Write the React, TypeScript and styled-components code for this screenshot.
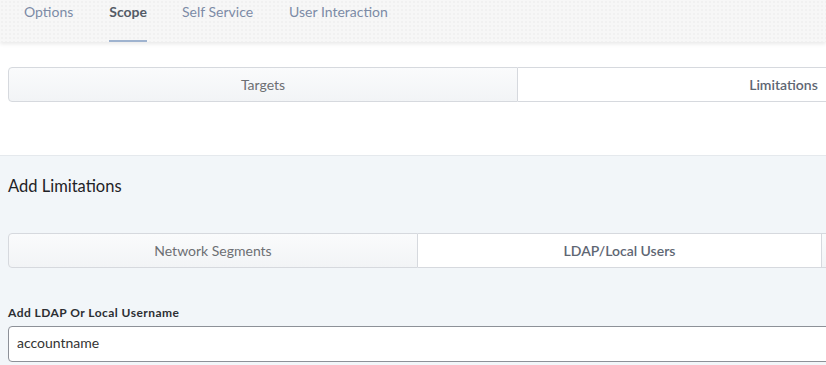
import styled, { createGlobalStyle } from 'styled-components';

const GlobalStyle = createGlobalStyle`
  html, body {
    margin: 0;
    padding: 0;
    background: #fff;
    overflow: hidden;
  }
  body {
    font-family: Lato, 'Open Sans', sans-serif;
    -webkit-font-smoothing: antialiased;
  }
`;

const Page = styled.div`
  width: 826px;
  height: 365px;
  overflow: hidden;
`;

const TabBar = styled.nav`
  height: 42px;
  display: flex;
  align-items: stretch;
  padding-left: 24px;
  background-color: #f7f7f7;
  background-image: radial-gradient(#f1f1f1 1px, transparent 1px);
  background-size: 4px 4px;
  box-shadow: 0 2px 4px rgba(0, 0, 0, 0.09);
  position: relative;
  z-index: 1;
`;

const Tab = styled.a<{ $active?: boolean; $gap: number }>`
  display: flex;
  align-items: flex-start;
  margin-right: ${({ $gap }) => $gap}px;
  padding-top: 3px;
  font-size: 14px;
  font-weight: ${({ $active }) => ($active ? 700 : 400)};
  color: ${({ $active }) => ($active ? '#545b66' : '#7c8ba6')};
  border-bottom: 2px solid ${({ $active }) => ($active ? '#9fb3cf' : 'transparent')};
  box-sizing: border-box;
  cursor: pointer;
`;

const TopSection = styled.section`
  height: 113px;
  padding: 25px 0 0 8px;
  box-sizing: border-box;
`;

const Segmented = styled.div`
  display: flex;
  height: 35px;
`;

const Segment = styled.div<{ $active?: boolean; $width: number; $first?: boolean }>`
  flex: 0 0 ${({ $width }) => $width}px;
  display: flex;
  align-items: center;
  justify-content: center;
  box-sizing: border-box;
  border: 1px solid #d6d9de;
  border-left-width: ${({ $first }) => ($first ? 1 : 0)}px;
  border-radius: ${({ $first }) => ($first ? '4px 0 0 4px' : '0')};
  background: ${({ $active }) =>
    $active ? '#fff' : 'linear-gradient(#fafbfc, #f2f4f6)'};
  font-size: 14px;
  color: ${({ $active }) => ($active ? '#5e6673' : '#6d6f73')};
  font-weight: ${({ $active }) => ($active ? 600 : 400)};
`;

const LowerSection = styled.section`
  background: #f2f6f9;
  border-top: 1px solid #e5e9ed;
  padding: 19px 0 0 8px;
  height: 210px;
`;

const Heading = styled.h2`
  margin: 0 0 36px;
  font-size: 16.5px;
  font-weight: 400;
  color: #1f2226;
  line-height: 22px;
`;

const FieldLabel = styled.label`
  display: block;
  margin-top: 38px;
  font-size: 12px;
  font-weight: 700;
  color: #2c2f33;
  line-height: 14px;
  letter-spacing: 0.45px;
`;

const TextInput = styled.input`
  display: block;
  margin-top: 6px;
  width: 840px;
  height: 36px;
  box-sizing: border-box;
  padding: 0 8px 3px;
  border: 1px solid #8d9198;
  border-radius: 4px;
  background: #fff;
  font-family: Lato, 'Open Sans', sans-serif;
  font-size: 14px;
  color: #333;
  outline: none;
`;

export default function App() {
  return (
    <Page>
      <GlobalStyle />
      <TabBar>
        <Tab $gap={36}>Options</Tab>
        <Tab $gap={35} $active>Scope</Tab>
        <Tab $gap={36}>Self Service</Tab>
        <Tab $gap={0}>User Interaction</Tab>
      </TabBar>
      <TopSection>
        <Segmented>
          <Segment $first $width={510}>Targets</Segment>
          <Segment $active $width={532}>Limitations</Segment>
        </Segmented>
      </TopSection>
      <LowerSection>
        <Heading>Add Limitations</Heading>
        <Segmented>
          <Segment $first $width={410}>Network Segments</Segment>
          <Segment $active $width={404}>LDAP/Local Users</Segment>
          <Segment $width={300} />
        </Segmented>
        <FieldLabel>Add LDAP Or Local Username</FieldLabel>
        <TextInput defaultValue="accountname" />
      </LowerSection>
    </Page>
  );
}
